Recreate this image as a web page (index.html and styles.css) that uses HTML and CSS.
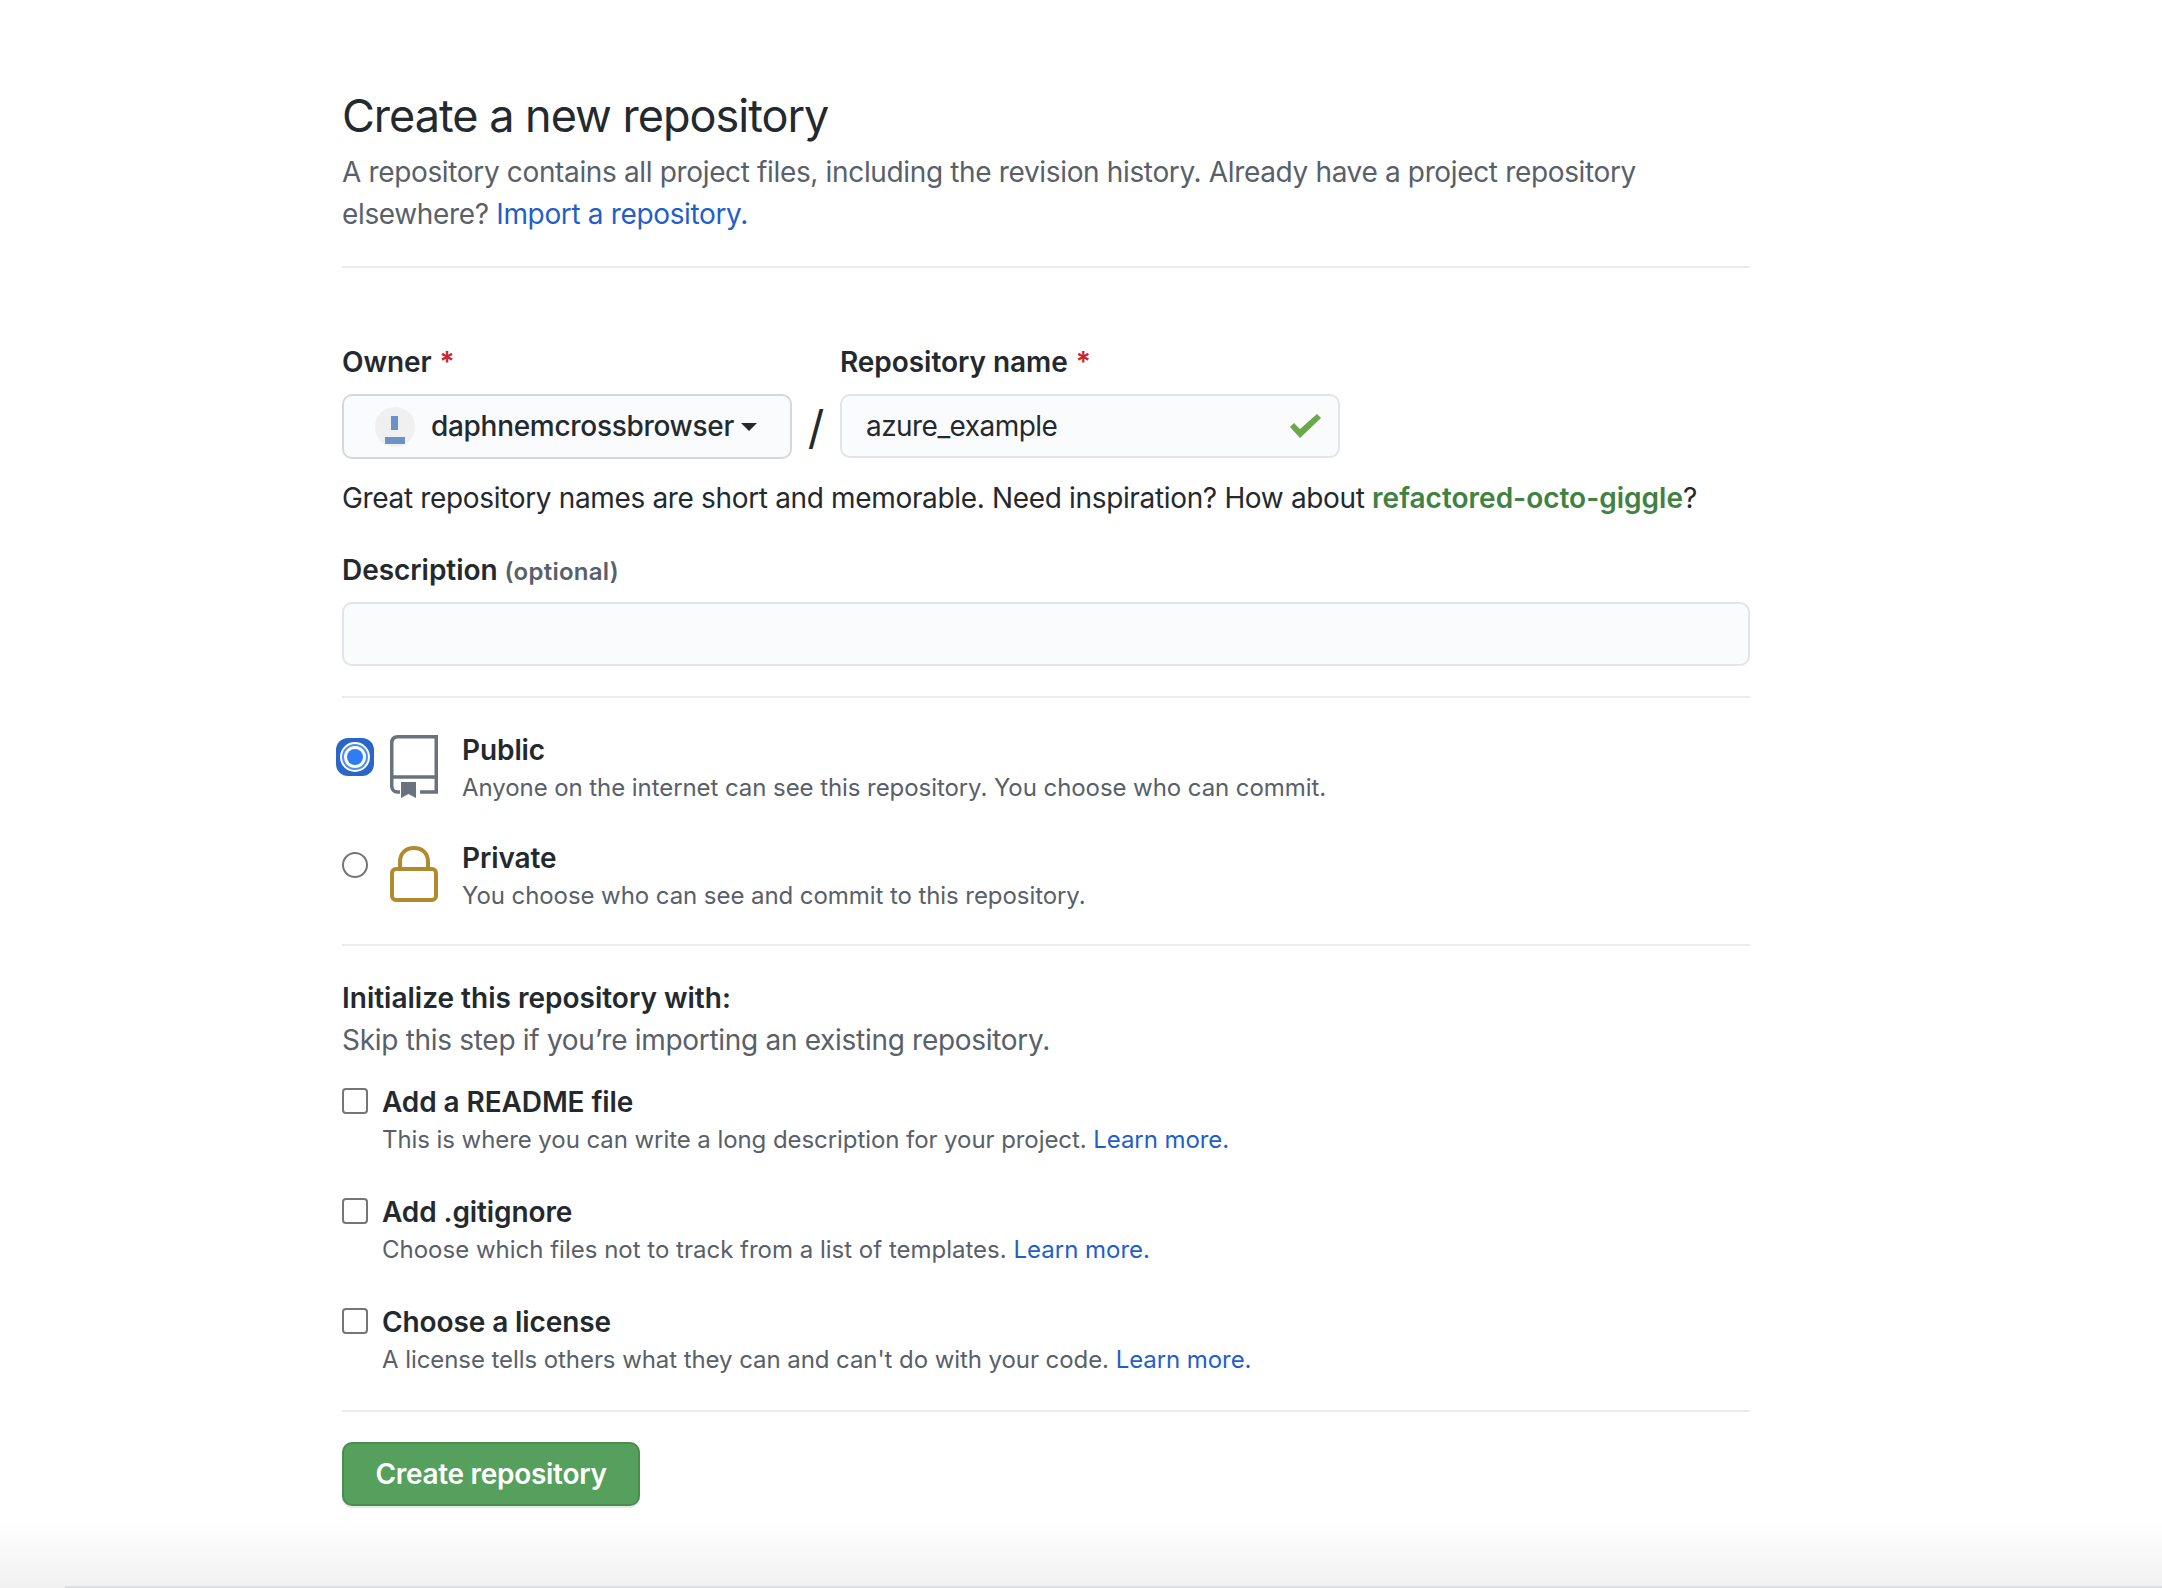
FILE: index.html
```html
<!DOCTYPE html>
<html lang="en">
<head>
<meta charset="utf-8">
<title>Create a new repository</title>
<link rel="stylesheet" href="styles.css">
</head>
<body>
<main class="page">
  <header class="head">
    <h1 class="title">Create a new repository</h1>
    <p class="lead">A repository contains all project files, including the revision history. Already have a project repository elsewhere? <a class="link" href="#">Import a repository.</a></p>
  </header>
  <section class="owner-row">
    <div class="owner-col">
      <div class="label">Owner <span class="req">*</span></div>
      <div class="select">
        <svg class="avatar" viewBox="0 0 40 40"><circle cx="20" cy="20" r="20" fill="#f0f0f1"/><rect x="16" y="9" width="7" height="14" fill="#6b93c9"/><rect x="10" y="30" width="20" height="7" fill="#6b93c9"/></svg>
        <span class="select-text">daphnemcrossbrowser</span>
        <span class="caret"></span>
      </div>
    </div>
    <div class="slash">/</div>
    <div class="name-col">
      <div class="label">Repository name <span class="req">*</span></div>
      <div class="input name-input">
        <span>azure_example</span>
        <svg class="check" viewBox="0 0 31 24"><path d="M0 13l4-4 6 6L27 0l4 4-21 20z" fill="#6aa84a"/></svg>
      </div>
    </div>
  </section>
  <p class="hint">Great repository names are short and memorable. Need inspiration? How about <a class="suggest" href="#">refactored-octo-giggle</a>?</p>
  <div class="label desc-label">Description <span class="optional">(optional)</span></div>
  <div class="input desc-input"></div>
  <hr class="rule rule-a">
  <section class="vis">
    <div class="vis-row">
      <span class="radio-on"><span class="radio-ring"><span class="radio-dot"></span></span></span>
      <svg class="vis-icon" viewBox="0 0 48 64"><path d="M10 57H7.500C4 57 1.750 54.500 1.750 51V8C1.750 4 4 1.750 8 1.750H46.250V57H30M3 42H46.250" fill="none" stroke="#6a737d" stroke-width="3.500"/><path d="M11 47h15v16l-7.500-4-7.500 4z" fill="#6a737d"/></svg>
      <div class="vis-text"><div class="opt-title">Public</div><div class="note">Anyone on the internet can see this repository. You choose who can commit.</div></div>
    </div>
    <div class="vis-row private">
      <span class="radio-off"></span>
      <svg class="vis-icon" viewBox="0 0 48 56"><g fill="none" stroke="#b08a2f" stroke-width="4"><rect x="2" y="23" width="44" height="31" rx="4"/><path d="M10 23v-7C10 7 16 2 24 2s14 5 14 14v7"/></g></svg>
      <div class="vis-text"><div class="opt-title">Private</div><div class="note">You choose who can see and commit to this repository.</div></div>
    </div>
  </section>
  <hr class="rule rule-b">
  <section class="init">
    <div class="init-title">Initialize this repository with:</div>
    <p class="init-sub">Skip this step if you’re importing an existing repository.</p>
    <div class="check-row">
      <span class="box"></span>
      <div><div class="opt-title">Add a README file</div><div class="note">This is where you can write a long description for your project. <a class="link" href="#">Learn more.</a></div></div>
    </div>
    <div class="check-row">
      <span class="box"></span>
      <div><div class="opt-title">Add .gitignore</div><div class="note note-wide">Choose which files not to track from a list of templates. <a class="link" href="#">Learn more.</a></div></div>
    </div>
    <div class="check-row">
      <span class="box"></span>
      <div><div class="opt-title">Choose a license</div><div class="note">A license tells others what they can and can't do with your code. <a class="link" href="#">Learn more.</a></div></div>
    </div>
  </section>
  <hr class="rule rule-c">
  <button class="create" type="button">Create repository</button>
</main>
<div class="fade"></div>
</body>
</html>
```
FILE: styles.css
```css
* { box-sizing: border-box; }
html, body { margin: 0; height: 1588px; overflow: hidden; background: #fff; }
body { position: relative; font-family: Inter, "Liberation Sans", sans-serif; color: #24292e; }
.page { width: 1408px; margin-left: 342px; padding-top: 85px; position: relative; z-index: 1; }
.title { margin: 0; font-size: 45px; font-weight: 400; line-height: 62px; height: 62px; letter-spacing: -1px; }
.lead { margin: 4px 0 0; font-size: 28px; line-height: 42px; color: #586069; letter-spacing: -0.35px; }
.link { color: #1f5fc9; text-decoration: none; }
.head { border-bottom: 2px solid #eaecef; padding-bottom: 31px; }
.owner-row { display: flex; margin-top: 73px; }
.owner-col { width: 450px; }
.name-col { width: 500px; }
.label { font-size: 28px; font-weight: 600; line-height: 42px; height: 53px; letter-spacing: -0.05px; }
.req { color: #cb2431; margin-left: 1px; }
.select { height: 65px; display: flex; align-items: center; border: 2px solid #d5d7da; border-radius: 10px; background: #fafbfc; padding: 0 0 2px 31px; font-size: 28px; font-weight: 500; letter-spacing: -0.3px; }
.avatar { width: 40px; height: 40px; margin: 2px 16px 0 0; flex: none; }
.caret { width: 0; height: 0; margin: 2px 0 0 7px; border: 8px solid transparent; border-top-color: #24292e; border-bottom: 0; }
.slash { width: 48px; padding-top: 51px; font-size: 46px; line-height: 70px; text-align: center; }
.input { border: 2px solid #e1e4e8; border-radius: 10px; background: #fafbfc; }
.name-input { height: 64px; display: flex; align-items: center; justify-content: space-between; padding: 0 17px 0 24px; font-size: 28px; letter-spacing: -0.55px; }
.check { width: 31px; height: 24px; }
.hint { margin: 15px 0 0; font-size: 28px; line-height: 42px; letter-spacing: -0.34px; }
.suggest { color: #418141; font-weight: 600; text-decoration: none; letter-spacing: 0; }
.desc-label { margin-top: 30px; height: 43px; }
.optional { font-size: 24px; color: #586069; letter-spacing: 0.27px; }
.desc-input { height: 64px; margin-top: 10px; }
.rule { height: 2px; border: 0; margin: 0; background: #eaecef; }
.rule-a { margin-top: 30px; }
.vis { padding-top: 31px; }
.vis-row { display: flex; height: 78px; margin-bottom: 30px; }
.private { margin-bottom: 29px; }
.radio-on { width: 38px; height: 38px; margin: 9px 16px 0 -6px; border-radius: 12px; background: #2a66c8; display: flex; align-items: center; justify-content: center; flex: none; }
.radio-ring { width: 30px; height: 30px; border-radius: 50%; background: #fff; display: flex; align-items: center; justify-content: center; }
.radio-dot { width: 16px; height: 16px; border-radius: 50%; background: #2f7df6; box-shadow: 0 0 0 3px #fff, 0 0 0 5px #4b8ef5; }
.radio-off { width: 26px; height: 26px; margin: 15px 22px 0 0; border: 2px solid #767676; border-radius: 50%; flex: none; }
.vis-icon { width: 48px; height: 64px; margin: 6px 24px 0 0; flex: none; }
.private .vis-icon { margin-top: 9px; height: 56px; }
.vis-text { padding-top: 1px; }
.opt-title { font-size: 28px; font-weight: 600; line-height: 40px; letter-spacing: -0.1px; }
.note { font-size: 24px; line-height: 36px; color: #586069; letter-spacing: -0.07px; }
.note-wide { letter-spacing: 0; }
.init { padding-top: 31px; }
.init-title { font-size: 28px; font-weight: 600; line-height: 42px; }
.init-sub { margin: 0 0 21px; font-size: 28px; line-height: 42px; color: #586069; letter-spacing: -0.3px; }
.check-row { display: flex; height: 110px; }
.box { width: 26px; height: 26px; margin: 6px 14px 0 0; border: 2px solid #767676; border-radius: 4px; flex: none; }
.rule-c { margin-top: -2px; }
.create { display: block; width: 298px; height: 64px; margin-top: 30px; padding: 0; border: 2px solid #4b8c50; border-radius: 10px; background: #55a05c; color: #fff; font: 600 28px Inter, "Liberation Sans", sans-serif; letter-spacing: -0.3px; box-shadow: 0 2px 1px #e4e6e8; }
.fade { position: absolute; left: 0; right: 0; bottom: 0; height: 68px; background: linear-gradient(#fff, #f1f1f2); }
.fade::after { content: ""; position: absolute; left: 65px; right: 0; bottom: 0; height: 2px; background: #dcdee2; }
```
